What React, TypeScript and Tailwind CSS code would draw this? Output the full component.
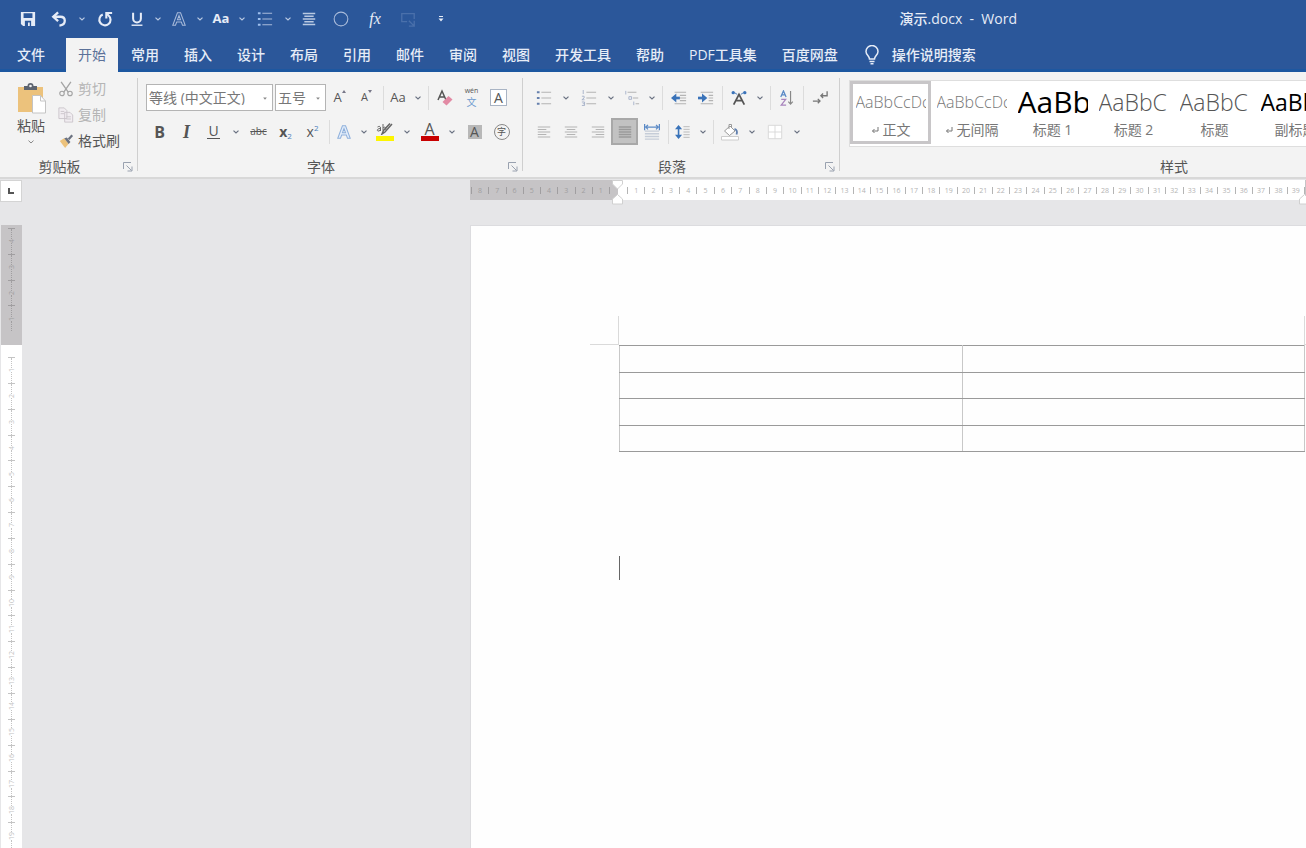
import React from 'react';

const tabs = ['常用', '插入', '设计', '布局', '引用', '邮件', '审阅', '视图', '开发工具', '帮助', 'PDF工具集', '百度网盘'];

const styles = [
  { name: '正文', preview: 'AaBbCcDc', mark: true, className: 'text-base font-light text-[#777]' },
  { name: '无间隔', preview: 'AaBbCcDc', mark: true, className: 'text-base font-light text-[#777]' },
  { name: '标题 1', preview: 'AaBb', className: 'text-[30px] text-black' },
  { name: '标题 2', preview: 'AaBbC', className: 'text-[23px] font-light text-[#555]' },
  { name: '标题', preview: 'AaBbC', className: 'text-[23px] font-light text-[#555]' },
  { name: '副标题', preview: 'AaBbC', className: 'text-[23px] font-medium text-black' },
];

const leftNumbers = [8, 7, 6, 5, 4, 3, 2, 1];
const rightNumbers = Array.from({ length: 39 }, (_, i) => i + 1);
const topNumbers = [4, 3, 2, 1];
const sideNumbers = Array.from({ length: 20 }, (_, i) => i + 1);

type IconProps = { children: React.ReactNode; size?: string };

function Icon({ children, size = 'size-[18px]' }: IconProps) {
  return (
    <svg viewBox="0 0 18 18" fill="none" stroke="currentColor" className={size} aria-hidden="true">
      {children}
    </svg>
  );
}

type ToolProps = { label: string; children: React.ReactNode; className?: string };

function Tool({ label, children, className = 'w-[27px]' }: ToolProps) {
  return (
    <button
      type="button"
      title={label}
      aria-label={label}
      className={`flex h-[27px] shrink-0 items-center justify-center ${className}`}
    >
      {children}
    </button>
  );
}

function Caret({ label, className = 'w-[18px] text-gray-500' }: { label: string; className?: string }) {
  return (
    <button
      type="button"
      aria-label={`${label}选项`}
      className={`flex h-[27px] shrink-0 items-center justify-center ${className}`}
    >
      <svg viewBox="0 0 6 4" className="h-1 w-1.5" fill="none" stroke="currentColor" strokeWidth="1.2">
        <path d="M.5 .6 3 3 5.5 .6" />
      </svg>
    </button>
  );
}

function Divider() {
  return (
    <div className="flex w-1.5 shrink-0 justify-center">
      <div className="h-6 w-px bg-[#dcdcdc]" />
    </div>
  );
}

function Group({ title, className, launcher = true, children }: {
  title: string;
  className: string;
  launcher?: boolean;
  children: React.ReactNode;
}) {
  return (
    <section aria-label={title} className={`flex shrink-0 flex-col ${className}`}>
      <div className="flex-1">{children}</div>
      <div className="flex h-5 items-center text-sm text-[#555]">
        <span className="flex-1 text-center">{title}</span>
        {launcher && (
          <button type="button" aria-label={`${title}设置`} className="w-[18px] pl-1 text-gray-400">
            <svg viewBox="0 0 10 10" className="size-2.5" fill="none" stroke="currentColor">
              <path d="M.5 7V.5H8M3.5 3.5l5 5M9 4.5V9H4.5" />
            </svg>
          </button>
        )}
      </div>
    </section>
  );
}

function GroupEdge() {
  return <div className="my-1.5 w-px shrink-0 bg-[#cfcfcf]" />;
}

function Picker({ label, value, className }: { label: string; value: string; className: string }) {
  return (
    <div className={`relative h-[27px] shrink-0 border border-[#b4b4b4] bg-white ${className}`}>
      <select
        aria-label={label}
        defaultValue={value}
        className="h-full w-full appearance-none bg-transparent pl-0.5 text-sm leading-none text-[#777] outline-none"
      >
        <option>{value}</option>
      </select>
      <svg viewBox="0 0 6 4" className="pointer-events-none absolute top-3 right-1 h-[3px] w-1.5" fill="#888">
        <path d="M.5 .5h5L3 3.5z" />
      </svg>
    </div>
  );
}

function QuickAccess() {
  const caret = 'w-[18px] text-[#b9c9e2]';
  return (
    <div className="flex items-center pl-[11px] text-[#e6ecf7]">
      <Tool label="保存" className="w-[34px]">
        <Icon size="size-4">
          <path d="M1 1h16v16H3.500L1 14.500z" fill="currentColor" stroke="none" />
          <path d="M4 2.500h10V8H4zM5.500 11h7v6h-7z" fill="#2b579a" stroke="none" />
          <path d="M9 13h2v4H9z" fill="currentColor" stroke="none" />
        </Icon>
      </Tool>
      <Tool label="撤消" className="w-7">
        <Icon size="size-4">
          <path d="M2.500 6.500h8c3 0 5 1.800 5 4.500s-2 5-6 5.500" strokeWidth="2.600" />
          <path d="M8 1.500l-5.500 5 5.500 5" strokeWidth="2.600" />
        </Icon>
      </Tool>
      <Caret label="撤消" className={caret} />
      <Tool label="重复" className="w-7">
        <Icon size="size-4">
          <path d="M6.500 4A6.300 6.300 0 1 0 13 5L11 3" strokeWidth="2.400" />
          <path d="M17 2.200h-6.500v6.300" strokeWidth="2.400" />
        </Icon>
      </Tool>
      <div className="ml-1.5 flex">
        <Tool label="下划线" className="w-6">
          <Icon size="size-3.5">
            <path d="M4 1v7.500a5 5 0 0 0 10 0V1" strokeWidth="2.600" />
            <path d="M2 17h14" strokeWidth="1.800" />
          </Icon>
        </Tool>
        <Caret label="下划线" className={caret} />
        <Tool label="文本效果" className="w-6">
          <Icon size="size-3.5">
            <path d="M1 17 7 1h4l6 16h-3.500l-1.500-4H6l-1.500 4zM7 10h4L9 4.500z" stroke="#a9bbda" strokeWidth="1.300" />
          </Icon>
        </Tool>
        <Caret label="文本效果" className={caret} />
        <Tool label="更改大小写" className="w-6">
          <span className="text-[13px] font-bold">Aa</span>
        </Tool>
        <Caret label="更改大小写" className={caret} />
        <Tool label="项目符号" className="w-7">
          <Icon size="size-4">
            <path d="M1 2.500h3M1 9h3M1 15.500h3" strokeWidth="2.400" stroke="#9fc0ee" />
            <path d="M6 2.500h11M6 9h11M6 15.500h11" stroke="#a9bbda" strokeWidth="1.300" />
          </Icon>
        </Tool>
        <Caret label="项目符号" className={caret} />
        <Tool label="居中" className="w-6">
          <Icon size="size-3.5">
            <path d="M1 2h16M3 5.500h12M1 9h16M3 12.500h12M1 16h16" stroke="#b9c9e2" strokeWidth="1.800" />
          </Icon>
        </Tool>
        <Tool label="椭圆" className="w-10">
          <Icon size="size-4">
            <circle cx="9" cy="9" r="7.700" stroke="#a9bbda" strokeWidth="1.200" />
          </Icon>
        </Tool>
        <Tool label="公式" className="w-7">
          <span className="font-['Liberation_Serif',serif] text-base italic">fx</span>
        </Tool>
        <Tool label="屏幕截图" className="w-[38px]">
          <Icon size="size-4">
            <path d="M8 12H2V3h14v6M10 11l6 6M16 11v6h-6" stroke="#4a70ab" strokeWidth="1.500" />
          </Icon>
        </Tool>
        <Tool label="自定义快速访问工具栏" className="w-7">
          <svg viewBox="0 0 6 6" className="size-1.5" fill="currentColor">
            <path d="M1 0h4v1H1zM.5 2.500h5L3 5.500z" />
          </svg>
        </Tool>
      </div>
    </div>
  );
}

function TabBar() {
  return (
    <nav className="flex h-[34px] shrink-0 text-sm font-medium text-[#e6ecf7] shadow-[inset_0_-3px_0_#1d57a0]">
      <button type="button" className="mr-1 w-[62px] shrink-0">文件</button>
      <div className="flex shrink-0 gap-px">
        <button type="button" aria-current="page" className="bg-[#f3f3f3] px-3 font-normal text-[#5b7199]">
          开始
        </button>
        {tabs.map((tab) => (
          <button key={tab} type="button" className="px-3 whitespace-nowrap">{tab}</button>
        ))}
      </div>
      <button type="button" className="ml-3.5 flex shrink-0 items-center gap-3 whitespace-nowrap">
        <svg viewBox="0 0 16 20" className="h-5 w-4" fill="none" stroke="currentColor" strokeWidth="1.500">
          <path d="M5.500 14c0-3-3.500-4-3.500-7.500a6 6 0 0 1 12 0c0 3.500-3.500 4.500-3.500 7.500z" />
          <path d="M5.500 16.500h5M6.500 18.800h3" strokeWidth="1.600" />
        </svg>
        操作说明搜索
      </button>
    </nav>
  );
}

function ClipboardGroup() {
  return (
    <Group title="剪贴板" className="w-[137px]">
      <div className="flex pl-4">
        <button type="button" className="flex w-[30px] flex-col items-center pt-2.5 text-sm whitespace-nowrap text-[#555]">
          <svg viewBox="0 0 30 32" className="h-8 w-[30px]" aria-hidden="true">
            <path d="M2 5h25v25H2z" fill="#ecc27c" />
            <path d="M8 8V4h3.500a3 3 0 0 1 6 0H21v4z" fill="#5d6470" />
            <circle cx="14.500" cy="4" r="1.300" fill="#f3f3f3" />
            <path d="M16.500 13.500h8l5 5.500v12h-13z" fill="#fff" stroke="#c4c4c4" />
            <path d="M24.500 13.500v5.500h5" fill="none" stroke="#c4c4c4" />
          </svg>
          <span className="mt-0.5 leading-5">粘贴</span>
          <svg viewBox="0 0 6 4" className="mt-1 h-1 w-1.5" fill="none" stroke="#888">
            <path d="M.5 .6 3 3 5.500 .6" />
          </svg>
        </button>
        <div className="flex flex-col pt-1 pl-3 text-sm text-[#b5b5b5]">
          <button type="button" className="flex h-[26px] items-center gap-1">
            <Icon size="size-4">
              <path d="M3.500 1l8 11.500M14.500 1l-8 11.500" stroke="#a4a4a4" strokeWidth="1.500" />
              <circle cx="4.500" cy="14" r="2.500" stroke="#a4a4a4" strokeWidth="1.300" />
              <circle cx="13.500" cy="14" r="2.500" stroke="#a4a4a4" strokeWidth="1.300" />
            </Icon>
            剪切
          </button>
          <button type="button" className="flex h-[26px] items-center gap-1">
            <Icon size="size-4">
              <path d="M1 1h6l3 3v9H1zM7.500 6h6l3 3v8h-9z" fill="#f1edf1" stroke="#c9c3c9" />
              <path d="M3 5h4M3 7.500h4M9.500 11h5M9.500 13.500h5" stroke="#c9c3c9" />
            </Icon>
            复制
          </button>
          <button type="button" className="flex h-[26px] items-center gap-1 text-[#555]">
            <Icon size="size-4">
              <path d="M2 9l5-3 5 6-4 5z" fill="#ecc27c" stroke="none" />
              <path d="M7 6l3-1 4 5-2 2.500z" fill="#6b7280" stroke="none" />
              <path d="M12 7l4-4.500" stroke="#6b7280" strokeWidth="2.500" />
            </Icon>
            格式刷
          </button>
        </div>
      </div>
    </Group>
  );
}

function FontGroup() {
  const caret = 'w-[15px] text-gray-500';
  return (
    <Group title="字体" className="w-[384px]">
      <div className="flex flex-col gap-[7px] pt-3 pl-2 text-[#555]">
        <div className="flex items-center">
          <Picker label="字体" value="等线 (中文正文)" className="mr-0.5 w-[127px]" />
          <Picker label="字号" value="五号" className="w-[51px]" />
          <Tool label="增大字号">
            <span className="text-[13px]">A</span>
            <svg viewBox="0 0 4 3" className="mb-3 h-[3px] w-1" fill="#778"><path d="M0 3 2 0l2 3z" /></svg>
          </Tool>
          <Tool label="减小字号">
            <span className="text-[11px]">A</span>
            <svg viewBox="0 0 4 3" className="mb-3 h-[3px] w-1" fill="#778"><path d="M0 0h4L2 3z" /></svg>
          </Tool>
          <Divider />
          <Tool label="更改大小写" className="w-6"><span className="text-[13px]">Aa</span></Tool>
          <Caret label="更改大小写" className={caret} />
          <Divider />
          <Tool label="清除所有格式">
            <Icon>
              <path d="M2 11 6 2l4 9M3.500 8h5" strokeWidth="1.500" />
              <path d="M6.500 13l6-6 4 3.500-6 6z" fill="#e28aa4" stroke="none" />
            </Icon>
          </Tool>
          <Tool label="拼音指南">
            <span className="flex flex-col items-center text-[7px] leading-[8px]">
              wén
              <span className="text-[10px] leading-[14px] text-[#6f9bcf]">文</span>
            </span>
          </Tool>
          <Tool label="字符边框">
            <span className="flex size-[17px] items-center justify-center border border-[#a9b4c4] bg-white text-sm">A</span>
          </Tool>
        </div>
        <div className="flex items-center">
          <Tool label="加粗"><span className="text-base leading-none font-bold">B</span></Tool>
          <Tool label="倾斜">
            <span className="font-['Liberation_Serif',serif] text-lg leading-none font-bold italic">I</span>
          </Tool>
          <Tool label="下划线">
            <span className="border-b border-current px-px text-sm leading-[14px]">U</span>
          </Tool>
          <Caret label="下划线" />
          <Tool label="删除线"><span className="text-[10px] line-through">abc</span></Tool>
          <Tool label="下标">
            <span className="text-sm font-bold">x</span>
            <span className="mt-2 text-[8px] text-[#4a7ebb]">2</span>
          </Tool>
          <Tool label="上标">
            <span className="text-sm">x</span>
            <span className="mb-2 text-[8px] text-[#4a7ebb]">2</span>
          </Tool>
          <Divider />
          <Tool label="文本效果" className="w-6">
            <Icon size="size-3.5">
              <path d="M1 17 7 1h4l6 16h-3.500l-1.500-4H6l-1.500 4zM7 10h4L9 4.500z" fill="#e4eefa" stroke="#8fb0dc" strokeWidth="1.300" />
            </Icon>
          </Tool>
          <Caret label="文本效果" className={caret} />
          <Tool label="文本突出显示颜色">
            <span className="flex flex-col items-center">
              <svg viewBox="0 0 18 12" className="h-3 w-[18px]" fill="none" stroke="#666">
                <path d="M16 1 9 9l-3 2 1.500-3.500L14 .5" strokeWidth="1.500" />
                <path d="M1.500 4c2-1.200 3-.5 3 1v3M4.500 5.500c-4 0-4 3-1.500 2.500l1.500-1M7 1v6.500M7 5c2-2 3.500 0 2.500 2" />
              </svg>
              <span className="mt-px h-[5px] w-[18px] bg-[#fdf500]" />
            </span>
          </Tool>
          <Caret label="突出显示" />
          <Tool label="字体颜色">
            <span className="flex flex-col items-center text-base leading-[14px]">
              A
              <span className="h-[5px] w-[18px] bg-[#c80000]" />
            </span>
          </Tool>
          <Caret label="字体颜色" />
          <Tool label="字符底纹">
            <span className="flex size-3.5 items-center justify-center bg-[#b8b8b8] text-sm">A</span>
          </Tool>
          <Tool label="带圈字符">
            <span className="flex size-4 items-center justify-center rounded-full border border-[#888] text-[9px]">字</span>
          </Tool>
        </div>
      </div>
    </Group>
  );
}

function ParagraphGroup() {
  const caret = 'w-[15px] text-gray-500';
  return (
    <Group title="段落" className="w-[316px]">
      <div className="flex flex-col gap-[7px] pt-3 pl-[7px] text-[#b4b4b4]">
        <div className="flex items-center">
          <Tool label="项目符号">
            <Icon size="size-4">
              <path d="M1 2.500h3M1 9h3M1 15.500h3" stroke="#6680ad" strokeWidth="2.200" />
              <path d="M6 2.500h11M6 9h11M6 15.500h11" strokeWidth="1.200" />
            </Icon>
          </Tool>
          <Caret label="项目符号" />
          <Tool label="编号">
            <Icon size="size-4">
              <path d="M2.500 0v4.500M1 7h2.500v2L1 11h3M1 13.500h3v4H1M2 15.500h2" stroke="#a3afc8" />
              <path d="M6 2.500h11M6 9h11M6 15.500h11" strokeWidth="1.200" />
            </Icon>
          </Tool>
          <Caret label="编号" />
          <Tool label="多级列表" className="w-6">
            <Icon size="size-4">
              <path d="M2 1v4M5.500 7.500v3h3v-3zM11 13v4" stroke="#a3afc8" />
              <path d="M4 2.500h10M10 9h6M13 15.500h4" strokeWidth="1.200" />
            </Icon>
          </Tool>
          <Caret label="多级列表" className={caret} />
          <Divider />
          <Tool label="减少缩进量">
            <Icon size="size-4">
              <path d="M4 2.500h13M10 6h7M10 9h7M10 12h7M4 15.500h13" strokeWidth="1.300" />
              <path d="M10 9H5" stroke="#3a73b9" strokeWidth="3" />
              <path d="M6 4v10L0 9z" fill="#3a73b9" stroke="none" />
            </Icon>
          </Tool>
          <Tool label="增加缩进量">
            <Icon size="size-4">
              <path d="M3 2.500h14M12 6h5M12 9h5M12 12h5M3 15.500h14" strokeWidth="1.300" />
              <path d="M0 9h5" stroke="#3a73b9" strokeWidth="3" />
              <path d="M4.500 4v10l6-5z" fill="#3a73b9" stroke="none" />
            </Icon>
          </Tool>
          <Divider />
          <Tool label="中文版式">
            <Icon size="size-4">
              <path d="M3 16.500 9 5l6 11.500M5 12h8" stroke="#555" strokeWidth="2" />
              <circle cx="2.500" cy="3" r="1.900" fill="#3a73b9" stroke="none" />
              <circle cx="15.500" cy="3" r="1.900" fill="#3a73b9" stroke="none" />
              <path d="M4 3l3 2M14 3l-3 2" stroke="#3a73b9" />
            </Icon>
          </Tool>
          <Caret label="中文版式" className={caret} />
          <Divider />
          <Tool label="排序">
            <Icon size="size-4">
              <path d="M2 8 5 1l3 7M3 5.500h4" stroke="#5b8ac6" strokeWidth="1.400" />
              <path d="M2.500 10.500h5l-5 6.500h5.500" stroke="#a884bd" strokeWidth="1.400" />
              <path d="M13 1v14.500M10.500 13l2.500 3 2.500-3" stroke="#888" strokeWidth="1.300" />
            </Icon>
          </Tool>
          <Divider />
          <Tool label="显示编辑标记">
            <Icon size="size-4">
              <path d="M17 1.500v5h-7M12.500 4 10 6.500 12.500 9M1 12.500h8M6.500 10 9 12.500 6.500 15" stroke="#777" strokeWidth="1.500" />
            </Icon>
          </Tool>
        </div>
        <div className="flex items-center">
          <Tool label="左对齐">
            <Icon size="size-3.5"><path d="M1 2.500h16M1 5.800h11M1 9h16M1 12.300h11M1 15.500h16" strokeWidth="1.300" /></Icon>
          </Tool>
          <Tool label="居中">
            <Icon size="size-3.5"><path d="M1 2.500h16M3.500 5.800h11M1 9h16M3.500 12.300h11M1 15.500h16" strokeWidth="1.300" /></Icon>
          </Tool>
          <Tool label="右对齐">
            <Icon size="size-3.5"><path d="M1 2.500h16M6 5.800h11M1 9h16M6 12.300h11M1 15.500h16" strokeWidth="1.300" /></Icon>
          </Tool>
          <Tool label="两端对齐" className="w-[27px] border-2 border-[#a8a8a8] bg-[#c2c2c2] text-[#9a9a9a]">
            <Icon size="size-3.5"><path d="M1 2.500h16M1 5.800h16M1 9h16M1 12.300h16M1 15.500h16" strokeWidth="1.800" /></Icon>
          </Tool>
          <Tool label="分散对齐">
            <Icon size="size-4">
              <path d="M1 8h16M1 11h16M1 14h16M1 17h16" stroke="#c6cdd8" strokeWidth="1.600" />
              <path d="M2 3.500h14M4.500 1 2 3.500 4.500 6M13.500 1 16 3.500 13.500 6M.7 0v7M17.300 0v7" stroke="#5b8ac6" strokeWidth="1.400" />
            </Icon>
          </Tool>
          <Divider />
          <Tool label="行和段落间距" className="w-6">
            <Icon size="size-4">
              <path d="M4 4v10" stroke="#3a73b9" strokeWidth="1.800" />
              <path d="M0 6 4 1l4 5zM0 12l4 5 4-5z" fill="#3a73b9" stroke="none" />
              <path d="M9.500 3h7M9.500 6h7M9.500 9h7M9.500 12h7M9.500 15h7" />
            </Icon>
          </Tool>
          <Caret label="行和段落间距" className={caret} />
          <Divider />
          <Tool label="底纹">
            <Icon>
              <path d="M3.500 8 9 3l5 5-5.500 4.500zM8 6V1.500h2.500V5" fill="#fff" stroke="#999" />
              <path d="M13.500 6c2.500.5 3 3 2 5.500" stroke="#5f7fae" strokeWidth="1.800" />
              <path d="M.5 13.500h17v3.500H.5z" fill="#fff" stroke="#ccc" />
            </Icon>
          </Tool>
          <Caret label="底纹" />
          <Tool label="边框">
            <Icon size="size-4">
              <path d="M1.500 1.500h15v15h-15z" fill="#fff" stroke="#d6d6d6" />
              <path d="M9 1.500v15M1.500 9h15" stroke="#d6d6d6" />
            </Icon>
          </Tool>
          <Caret label="边框" />
        </div>
      </div>
    </Group>
  );
}

function StylesGroup() {
  return (
    <Group title="样式" className="w-[668px]" launcher={false}>
      <div className="mt-2 ml-[9px] flex h-[67px] border border-[#dedede] bg-white">
        {styles.map((style, index) => (
          <button
            key={style.name}
            type="button"
            className={`flex h-[63px] w-[81px] shrink-0 flex-col items-center border-3 ${
              index === 0 ? 'border-[#c8c6c8]' : 'border-transparent'
            }`}
          >
            <span className="mt-0.5 flex h-8 w-[70px] items-center overflow-hidden whitespace-nowrap">
              <span className={`leading-8 ${style.className}`}>{style.preview}</span>
            </span>
            <span className="mt-0.5 flex items-center gap-1 text-sm leading-5 whitespace-nowrap text-[#777]">
              {style.mark && (
                <svg viewBox="0 0 8 8" className="size-2" fill="none" stroke="currentColor">
                  <path d="M7 1v4H1.500M3.500 3l-2 2 2 2" />
                </svg>
              )}
              {style.name}
            </span>
          </button>
        ))}
      </div>
    </Group>
  );
}

function RulerCells({ numbers, className }: { numbers: number[]; className: string }) {
  return (
    <div className={`flex shrink-0 items-center ${className}`}>
      {numbers.map((n) => (
        <div key={n} className="flex flex-1 items-center">
          <span className="h-[7px] w-px bg-current" />
          <span className="flex-1 text-center text-[7px] leading-none">{n}</span>
        </div>
      ))}
      <span className="h-[7px] w-px bg-current" />
    </div>
  );
}

function SideCells({ numbers, className }: { numbers: number[]; className: string }) {
  return (
    <div className={`flex shrink-0 flex-col ${className}`}>
      {numbers.map((n) => (
        <div key={n} className="flex min-h-0 flex-1 flex-col items-center">
          <span className="h-px w-[7px] bg-current" />
          <span className="flex-1 border-l border-dotted border-current" />
          <span className="py-px text-[7px] leading-[7px] [writing-mode:sideways-lr]">{n}</span>
          <span className="flex-1 border-l border-dotted border-current" />
        </div>
      ))}
    </div>
  );
}

function IndentMarker({ firstLine = false }: { firstLine?: boolean }) {
  return (
    <svg viewBox="0 0 11 25" className="absolute top-0 -left-1.5 z-10 h-[25px] w-[11px]" fill="#fff" stroke="#d0d0d0">
      {firstLine && <path d="M.5 .5h10v3.500l-5 5-5-5z" />}
      <path d="M5.500 14.500l5 4.500v5H.5v-5z" />
    </svg>
  );
}

function TopRuler() {
  return (
    <div className="flex h-[46px] shrink-0 pt-px">
      <button
        type="button"
        aria-label="制表符"
        className="flex size-[22px] shrink-0 items-center justify-center border border-[#d4d4d4] bg-white"
      >
        <svg viewBox="0 0 6 6" className="size-1.5" fill="none" stroke="#555" strokeWidth="2">
          <path d="M1 0v5h5" />
        </svg>
      </button>
      <div className="ml-[448px] flex h-5 shrink-0">
        <div className="w-[148px] bg-[#c6c4c6] text-[#a09ea0]">
          <RulerCells numbers={leftNumbers} className="ml-px h-full w-[139px]" />
        </div>
        <div className="relative bg-white text-[#b4b4b4]">
          <IndentMarker firstLine />
          <RulerCells numbers={rightNumbers} className="ml-[9px] h-full w-[678px]" />
        </div>
        <div className="relative w-[148px] bg-[#c6c4c6]">
          <IndentMarker />
        </div>
      </div>
    </div>
  );
}

function SideRuler() {
  return (
    <div className="mr-[448px] ml-px w-[21px] shrink-0 overflow-hidden bg-white text-[#c4c4c4]">
      <div className="h-[120px] bg-[#c6c4c6] pt-[3px] text-[#a09ea0]">
        <SideCells numbers={topNumbers} className="h-[103px]" />
      </div>
      <SideCells numbers={sideNumbers} className="mt-3 h-[517px]" />
    </div>
  );
}

function Page() {
  const cell = 'border border-x-[#c8c8c8] border-y-[#9a9a9a]';
  return (
    <main className="w-[982px] shrink-0 border-t border-l border-[#dcdcdf] bg-[#fefefe]">
      <div className="flex justify-between px-[119px] pt-[90px]">
        <div className="size-[29px] border-r border-b border-[#dadada]" />
        <div className="size-[29px] border-b border-l border-[#dadada]" />
      </div>
      <table className="ml-[148px] h-[107px] w-[686px] table-fixed border-collapse">
        <tbody>
          {[0, 1, 2, 3].map((row) => (
            <tr key={row}>
              <td className={cell} />
              <td className={cell} />
            </tr>
          ))}
        </tbody>
      </table>
      <div className="mt-[104px] ml-[148px] h-6 w-px bg-[#666]" />
    </main>
  );
}

export default function App() {
  return (
    <div className="flex h-screen flex-col overflow-hidden bg-[#e6e6e8] font-['Open_Sans','Noto_Sans_CJK_SC',sans-serif]">
      <header className="flex shrink-0 flex-col bg-[#2b579a]">
        <div className="flex h-[38px] items-center">
          <QuickAccess />
          <h1 className="mr-[289px] ml-auto text-sm font-medium whitespace-pre text-[#e6ecf7]">演示.docx  -  Word</h1>
        </div>
        <TabBar />
      </header>
      <div className="flex h-[107px] shrink-0 overflow-hidden border-b-2 border-[#d8d8d8] bg-[#f3f3f3]">
        <ClipboardGroup />
        <GroupEdge />
        <FontGroup />
        <GroupEdge />
        <ParagraphGroup />
        <GroupEdge />
        <StylesGroup />
      </div>
      <TopRuler />
      <div className="flex min-h-0 flex-1">
        <SideRuler />
        <Page />
      </div>
    </div>
  );
}
